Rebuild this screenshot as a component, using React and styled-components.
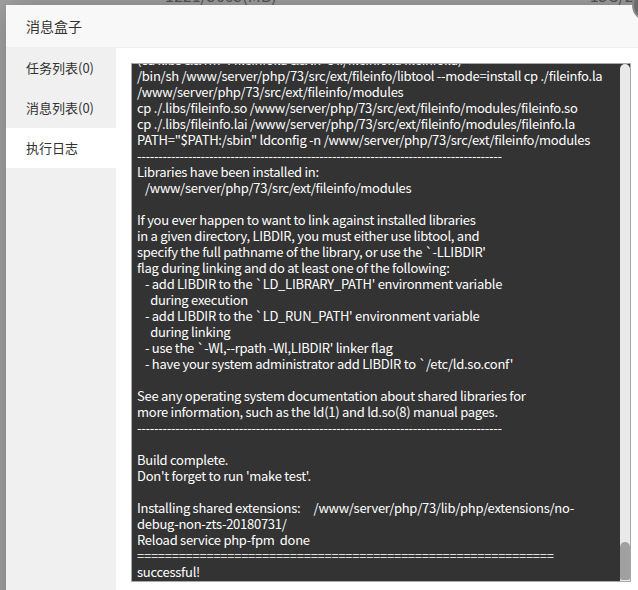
import React, { useEffect, useRef } from 'react';
import styled, { createGlobalStyle } from 'styled-components';

const GlobalStyle = createGlobalStyle`
  html, body {
    margin: 0;
    padding: 0;
    height: 100%;
    overflow: hidden;
  }
  body {
    background: #a2a2a2;
    font-family: "Noto Sans CJK SC", "Liberation Sans", sans-serif;
  }
`;

const Backdrop = styled.div`
  position: fixed;
  inset: 0;
  background: #a2a2a2;
`;

const BackdropTop = styled.div`
  display: flex;
  margin-top: -15px;
  padding-left: 165px;
  font-size: 16px;
  line-height: 20px;
  color: #555;
  white-space: nowrap;
`;

const BackdropCell = styled.span`
  margin-left: ${p => p.$push || 0}px;
`;

const Layer = styled.div`
  position: fixed;
  left: 6px;
  top: 5px;
  width: 650px;
  bottom: -30px;
  background: #fff;
  box-shadow: 1px 1px 30px rgba(0, 0, 0, 0.25);
  display: flex;
  flex-direction: column;
`;

const Title = styled.div`
  height: 42px;
  line-height: 42px;
  padding: 0 20px;
  background: #f8f8f8;
  border-bottom: 1px solid #eee;
  font-size: 14px;
  color: #333;
  flex-shrink: 0;
`;

const Body = styled.div`
  flex: 1;
  display: flex;
  min-height: 0;
`;

const TabList = styled.ul`
  list-style: none;
  margin: 0;
  padding: 0;
  width: 110px;
  background: #f0f0f0;
  flex-shrink: 0;
`;

const Tab = styled.li`
  height: 40px;
  line-height: 40px;
  padding-left: 20px;
  font-size: 13px;
  color: #333;
  background: ${p => (p.$active ? '#fff' : 'transparent')};
`;

const Content = styled.div`
  flex: 1;
  padding: 15px 0 0 15px;
`;

const LogFrame = styled.div`
  box-sizing: border-box;
  width: 500px;
  height: 519px;
  border: 1px solid #a9a9a9;
  background: #333;
  display: flex;
`;

const LogText = styled.div`
  flex: 1;
  padding: 0 5px;
  color: #fff;
  font-size: 13px;
  line-height: 16px;
  letter-spacing: -0.27px;
  white-space: pre;
  overflow: hidden;
`;

const ScrollTrack = styled.div`
  width: 10px;
  flex-shrink: 0;
  background: #e9e9e9;
  border-radius: 5px 5px 0 0;
  display: flex;
  flex-direction: column;
  justify-content: flex-end;
  padding-bottom: 1px;
`;

const ScrollThumb = styled.div`
  height: 38px;
  background: #a0a0a0;
  border-radius: 5px 5px 2px 2px;
`;

const CloseDot = styled.div`
  position: fixed;
  left: 632px;
  top: -12px;
  width: 30px;
  height: 30px;
  border-radius: 50%;
  background: #6b6b6b;
  border: 2px solid #8a8a8a;
`;

const dashes = '-'.repeat(86);
const equals = '='.repeat(60);

const lines = [
  '(cd .libs && rm -f fileinfo.la && ln -s ../fileinfo.la fileinfo.la)',
  '/bin/sh /www/server/php/73/src/ext/fileinfo/libtool --mode=install cp ./fileinfo.la',
  '/www/server/php/73/src/ext/fileinfo/modules',
  'cp ./.libs/fileinfo.so /www/server/php/73/src/ext/fileinfo/modules/fileinfo.so',
  'cp ./.libs/fileinfo.lai /www/server/php/73/src/ext/fileinfo/modules/fileinfo.la',
  'PATH="$PATH:/sbin" ldconfig -n /www/server/php/73/src/ext/fileinfo/modules',
  dashes,
  'Libraries have been installed in:',
  '   /www/server/php/73/src/ext/fileinfo/modules',
  '',
  'If you ever happen to want to link against installed libraries',
  'in a given directory, LIBDIR, you must either use libtool, and',
  "specify the full pathname of the library, or use the `-LLIBDIR'",
  'flag during linking and do at least one of the following:',
  "   - add LIBDIR to the `LD_LIBRARY_PATH' environment variable",
  '     during execution',
  "   - add LIBDIR to the `LD_RUN_PATH' environment variable",
  '     during linking',
  "   - use the `-Wl,--rpath -Wl,LIBDIR' linker flag",
  "   - have your system administrator add LIBDIR to `/etc/ld.so.conf'",
  '',
  'See any operating system documentation about shared libraries for',
  'more information, such as the ld(1) and ld.so(8) manual pages.',
  dashes,
  '',
  'Build complete.',
  "Don't forget to run 'make test'.",
  '',
  'Installing shared extensions:     /www/server/php/73/lib/php/extensions/no-',
  'debug-non-zts-20180731/',
  'Reload service php-fpm  done',
  equals,
  'successful!',
];

const tabs = ['任务列表(0)', '消息列表(0)', '执行日志'];

export default function App() {
  const logRef = useRef(null);

  useEffect(() => {
    const el = logRef.current;
    if (el) el.scrollTop = el.scrollHeight;
  }, []);

  return (
    <>
      <GlobalStyle />
      <Backdrop>
        <BackdropTop>
          <BackdropCell>1221/5665(MB)</BackdropCell>
          <BackdropCell $push={313}>15G/25G</BackdropCell>
        </BackdropTop>
      </Backdrop>
      <Layer>
        <Title>消息盒子</Title>
        <Body>
          <TabList>
            {tabs.map((t, i) => (
              <Tab key={t} $active={i === 2}>{t}</Tab>
            ))}
          </TabList>
          <Content>
            <LogFrame>
              <LogText ref={logRef}>{lines.join('\n')}</LogText>
              <ScrollTrack>
                <ScrollThumb />
              </ScrollTrack>
            </LogFrame>
          </Content>
        </Body>
      </Layer>
      <CloseDot />
    </>
  );
}
